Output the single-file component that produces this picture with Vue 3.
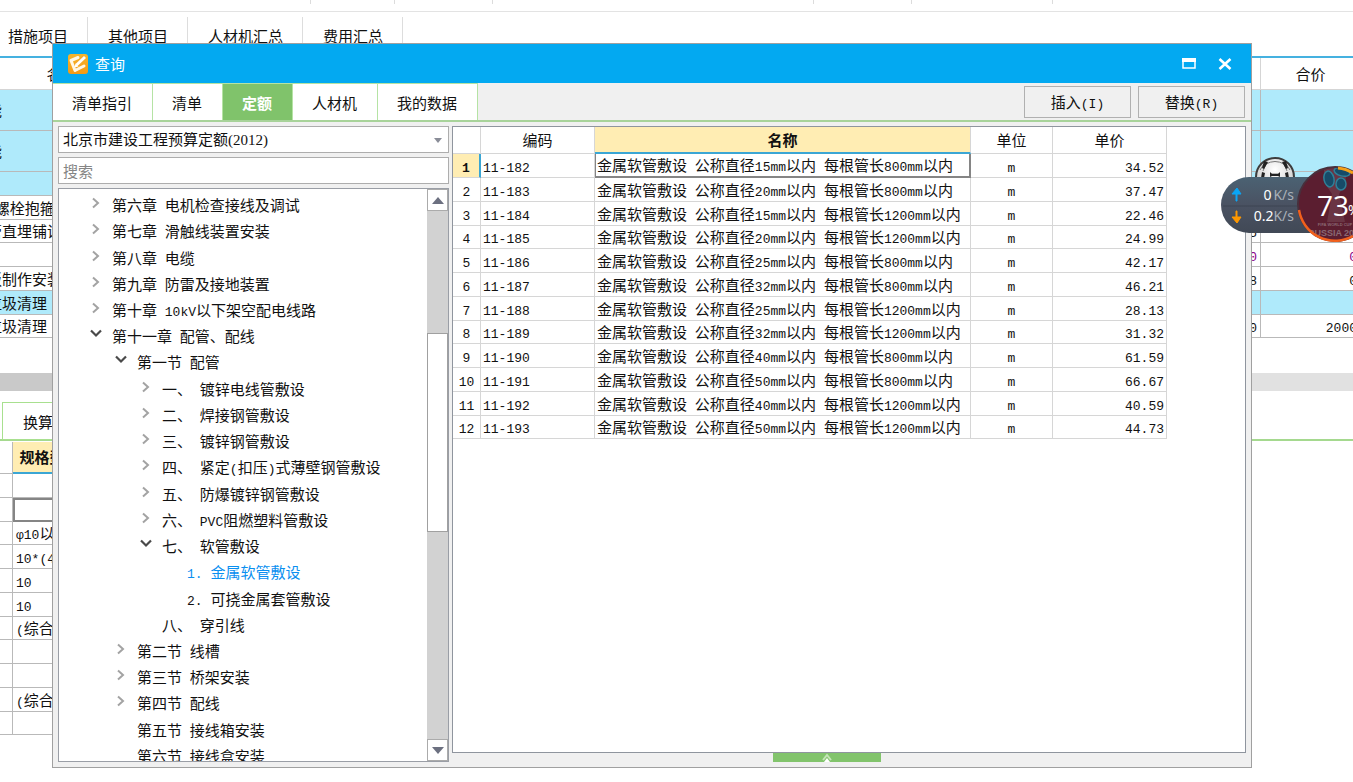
<script setup>
import { h, ref } from 'vue'

// Renders text with its half-width runs in the fixed-pitch face.
const Mixed = (props) =>
  props.text
    .split(/([\x20-\x7eφ]+)/)
    .filter(Boolean)
    .map((run) => (/^[\x20-\x7eφ]/.test(run) ? h('span', { class: 'half' }, run) : run))
Mixed.props = ['text']

const mainTabs = ['措施项目', '其他项目', '人材机汇总', '费用汇总']
const items = [
  { name: '能', tall: true, blue: true },
  { name: '能', tall: true, blue: true },
  { name: '', blue: true },
  { name: ' 螺栓抱箍', price: '44.64' },
  { name: '管直埋铺设', price: '18.15' },
  { name: '', price: '0', total: '0', purple: true },
  { name: '板制作安装', price: '3.18', total: '0' },
  { name: '垃圾清理', blue: true },
  { name: '垃圾清理', price: '2000', total: '2000' },
]
const specs = ['', '', 'φ10以内', '10*(4)', '10', '10', '(综合)', '', '', '(综合)', '']

const tabs = ['清单指引', '清单', '定额', '人材机', '我的数据']
const activeTab = ref('定额')
const query = ref('')

const tree = [
  [0, '第六章 电机检查接线及调试', 'closed'],
  [0, '第七章 滑触线装置安装', 'closed'],
  [0, '第八章 电缆', 'closed'],
  [0, '第九章 防雷及接地装置', 'closed'],
  [0, '第十章 10kV以下架空配电线路', 'closed'],
  [0, '第十一章 配管、配线', 'open'],
  [1, '第一节 配管', 'open'],
  [2, '一、 镀锌电线管敷设', 'closed'],
  [2, '二、 焊接钢管敷设', 'closed'],
  [2, '三、 镀锌钢管敷设', 'closed'],
  [2, '四、 紧定(扣压)式薄壁钢管敷设', 'closed'],
  [2, '五、 防爆镀锌钢管敷设', 'closed'],
  [2, '六、 PVC阻燃塑料管敷设', 'closed'],
  [2, '七、 软管敷设', 'open'],
  [3, '1. 金属软管敷设', 'leaf'],
  [3, '2. 可挠金属套管敷设', 'leaf'],
  [2, '八、 穿引线', 'leaf'],
  [1, '第二节 线槽', 'closed'],
  [1, '第三节 桥架安装', 'closed'],
  [1, '第四节 配线', 'closed'],
  [1, '第五节 接线箱安装', 'leaf'],
  [1, '第六节 接线盒安装', 'leaf'],
].map(([level, label, state]) => ({ level, label, state }))
const current = ref('1. 金属软管敷设')

const rows = [
  [15, 800, '34.52'],
  [20, 800, '37.47'],
  [15, 1200, '22.46'],
  [20, 1200, '24.99'],
  [25, 800, '42.17'],
  [32, 800, '46.21'],
  [25, 1200, '28.13'],
  [32, 1200, '31.32'],
  [40, 800, '61.59'],
  [50, 800, '66.67'],
  [40, 1200, '40.59'],
  [50, 1200, '44.73'],
].map(([d, len, price], i) => ({
  code: `11-${182 + i}`,
  name: `金属软管敷设 公称直径${d}mm以内 每根管长${len}mm以内`,
  price,
}))
</script>

<template>
  <div class="page">
    <div class="ribbon">
      <i v-for="n in 6" :key="n" :class="'sep' + n"></i>
    </div>
    <nav class="main-tabs">
      <button v-for="t in mainTabs" :key="t">{{ t }}</button>
    </nav>

    <table class="items">
      <colgroup><col class="c-item" /><col /><col class="c-num" /><col class="c-num" /></colgroup>
      <thead>
        <tr><th>名称</th><th></th><th></th><th>合价</th></tr>
      </thead>
      <tbody>
        <tr v-for="(r, i) in items" :key="i" :class="{ tall: r.tall, blue: r.blue, purple: r.purple }">
          <td><Mixed :text="r.name" /></td>
          <td></td>
          <td class="num"><Mixed :text="r.price || ''" /></td>
          <td class="num"><Mixed :text="r.total || ''" /></td>
        </tr>
      </tbody>
    </table>

    <div class="splitter"><i></i><i></i></div>
    <div class="sub-tabs"><button>换算信息</button></div>

    <table class="specs">
      <colgroup><col class="c-edge" /><col class="c-spec" /><col /></colgroup>
      <thead>
        <tr><th></th><th class="picked">规格型号</th><th></th></tr>
      </thead>
      <tbody>
        <tr v-for="(s, i) in specs" :key="i">
          <td></td>
          <td :class="{ cell: i === 1 }"><Mixed :text="s" /></td>
          <td></td>
        </tr>
      </tbody>
    </table>

    <section class="dialog" role="dialog" aria-label="查询">
      <header class="title">
        <svg class="logo" width="20" height="20" viewBox="0 0 20 20">
          <defs>
            <linearGradient id="amber" x1="0" y1="0" x2="0" y2="1">
              <stop offset="0" stop-color="#f7b52c" /><stop offset="1" stop-color="#f39a16" />
            </linearGradient>
          </defs>
          <rect width="20" height="20" rx="3" fill="url(#amber)" />
          <path d="M10 3.500L3 6.500 7 16.500 16 12" fill="none" stroke="#fff6e4" stroke-width="3" stroke-linejoin="round" stroke-linecap="round" />
          <path d="M8 11.500L17 3" stroke="#f5a828" stroke-width="5" />
          <path d="M8.500 11L17 3" stroke="#fff" stroke-width="3" />
          <path d="M6.500 13.500l1-4 3 3z" fill="#fff" />
        </svg>
        <h1>查询</h1>
        <button class="win" aria-label="最大化">
          <svg width="14" height="12" viewBox="0 0 14 12"><path d="M1 1h12v9H1z" fill="none" stroke="#fff" stroke-width="1.500" /><path d="M0 0h14v4H0z" fill="#fff" /></svg>
        </button>
        <button class="win" aria-label="关闭">
          <svg width="14" height="12" viewBox="0 0 14 12"><path d="M1.500 1l11 10M12.500 1l-11 10" stroke="#fff" stroke-width="2.600" /></svg>
        </button>
      </header>

      <div class="bar">
        <nav class="tabs">
          <button v-for="t in tabs" :key="t" :class="{ active: t === activeTab }" @click="activeTab = t">{{ t }}</button>
        </nav>
        <button class="action"><Mixed text="插入(I)" /></button>
        <button class="action"><Mixed text="替换(R)" /></button>
      </div>

      <div class="body">
        <aside>
          <div class="combo">
            <select aria-label="定额库"><option>北京市建设工程预算定额(2012)</option></select>
            <svg width="8" height="5" viewBox="0 0 8 5"><path d="M0 0h8L4 5z" fill="#8a8d98" /></svg>
          </div>
          <input v-model="query" type="text" placeholder="搜索" aria-label="搜索" />
          <div class="tree">
            <div class="view">
              <ul>
                <li v-for="n in tree" :key="n.label" :class="'lv' + n.level">
                  <button :class="{ current: n.label === current }" @click="current = n.label">
                    <svg width="12" height="12" viewBox="0 0 12 12" fill="none">
                      <path v-if="n.state === 'closed'" d="M3 1.500l5 4.500-5 4.500" stroke="#a3a3a3" stroke-width="2" />
                      <path v-if="n.state === 'open'" d="M1 2.500l5 5 5-5" stroke="#4a4a4a" stroke-width="2.200" />
                    </svg>
                    <span><Mixed :text="n.label" /></span>
                  </button>
                </li>
              </ul>
            </div>
            <div class="scroll">
              <button aria-label="向上"><svg width="12" height="7" viewBox="0 0 12 7"><path d="M6 0l6 7H0z" fill="#6c7080" /></svg></button>
              <i class="gap-top"></i>
              <i class="thumb"></i>
              <i class="gap-bottom"></i>
              <button aria-label="向下"><svg width="12" height="7" viewBox="0 0 12 7"><path d="M6 7l6-7H0z" fill="#6c7080" /></svg></button>
            </div>
          </div>
        </aside>

        <main>
          <div class="panel">
            <table class="grid">
              <colgroup><col class="g-no" /><col class="g-code" /><col class="g-name" /><col class="g-unit" /><col class="g-code" /></colgroup>
              <thead>
                <tr><th></th><th>编码</th><th class="picked">名称</th><th>单位</th><th>单价</th></tr>
              </thead>
              <tbody>
                <tr v-for="(r, i) in rows" :key="r.code">
                  <th :class="{ mark: i === 0 }"><Mixed :text="String(i + 1)" /></th>
                  <td><Mixed :text="r.code" /></td>
                  <td :class="{ cell: i === 0 }"><Mixed :text="r.name" /></td>
                  <td class="mid"><Mixed text="m" /></td>
                  <td class="num"><Mixed :text="r.price" /></td>
                </tr>
              </tbody>
            </table>
          </div>
          <button class="expand" aria-label="展开">
            <svg width="12" height="9" viewBox="0 0 12 9"><path d="M2 7l4-5 4 5" fill="none" stroke="#c5e5b8" stroke-width="2" /><path d="M6 5l3 4H3z" fill="#fff" /></svg>
          </button>
        </main>
      </div>
    </section>

    <svg class="meter" width="138" height="100" viewBox="0 0 138 100">
      <defs>
        <linearGradient id="slate" x1="0" y1="0" x2="0" y2="1">
          <stop offset="0" stop-color="#4b6273" /><stop offset="0.500" stop-color="#4a5262" /><stop offset="1" stop-color="#414956" />
        </linearGradient>
        <radialGradient id="leather" cx="0.500" cy="0.300" r="0.700">
          <stop offset="0" stop-color="#fff" /><stop offset="1" stop-color="#c4c4c4" />
        </radialGradient>
        <clipPath id="disc"><circle cx="120" cy="54" r="36" /></clipPath>
      </defs>
      <circle cx="60" cy="27" r="19" fill="url(#leather)" stroke="#3d3d3d" stroke-width="2" />
      <path d="M55 24h10M51 14q9-5 18 0M51 14l-3 7M69 14l3 7M45 20l4-6M75 20l-4-6" fill="none" stroke="#777" stroke-width="1" />
      <path d="M55 22l2 2h6l2-2v5l-2-1h-6l-2 1zM49 11l4 1-4 7-2-1zM71 11l-4 1 4 7 2-1zM47 22l3 1-1 5h-3zM73 22l-3 1 1 5h3z" fill="#222" />
      <rect x="6" y="27" width="124" height="56" rx="28" fill="url(#slate)" />
      <path d="M8 56h76" stroke="#3d4552" />
      <path d="M21 51v-7h-4l5-6 4 6h-4v7z" fill="#0aa5f5" stroke="#0aa5f5" />
      <path d="M21 61v6h-4l5 6 4-6h-4v-6z" fill="#ff9800" stroke="#ff9800" />
      <g class="speed" text-anchor="end">
        <text x="79" y="50"><tspan fill="#fff">0</tspan><tspan dx="2">K/s</tspan></text>
        <text x="79" y="71"><tspan fill="#fff">0.2</tspan><tspan>K/s</tspan></text>
      </g>
      <circle cx="120" cy="54" r="37" fill="#5b1e30" stroke="#48303c" stroke-width="2" />
      <g clip-path="url(#disc)">
        <path d="M109 18q11-6 23 2l-2 14-6 10 6 28h-18l5-28-8-12z" fill="#6a3544" />
        <g fill="#174b68" stroke="#2f8098" stroke-width="1.500">
          <ellipse cx="114" cy="29" rx="5" ry="8" transform="rotate(-12 114 29)" />
          <ellipse cx="127" cy="22" rx="8" ry="4" transform="rotate(14 127 22)" />
          <ellipse cx="126" cy="34" rx="5" ry="6" />
        </g>
        <g class="cup"><text x="120" y="76" font-size="4">FIFA WORLD CUP</text><text x="121" y="86" font-size="9">RUSSIA 2018</text></g>
      </g>
      <path d="M123 18a36 36 0 0 1 15 5" fill="none" stroke="#f5a019" stroke-width="3" />
      <path d="M84 60a36.500 36.500 0 0 0 54 26" fill="none" stroke="#f2611d" stroke-width="2.500" />
      <text class="pct" x="102" y="66">73</text>
      <text class="unit" x="133" y="65">%</text>
    </svg>
  </div>
</template>

<style>
body { margin: 0; overflow: hidden; }
.half { font-family: "Liberation Mono", monospace; font-size: 13px; line-height: 13px; white-space: pre; }
</style>

<style scoped>
.page {
  position: relative;
  min-height: 100vh;
  overflow: hidden;
  background: #fff;
  color: #111;
  font: 15px/20px "Noto Sans CJK SC", sans-serif;
}
.page *, .page { box-sizing: border-box; }
button, input, select { font: inherit; color: inherit; }
button { padding: 0; border: 0; background: none; cursor: pointer; }
table { border-spacing: 0; table-layout: fixed; }
th, td { height: 24px; padding: 0 3px; line-height: 20px; white-space: nowrap; overflow: hidden; text-align: left; font-weight: 400; }
thead th { text-align: center; }
.num { text-align: right; }

.ribbon { display: flex; height: 12px; border-bottom: 1px solid #e3e3e3; }
.ribbon i { height: 4px; border-right: 1px solid #dcdcdc; }
.sep1 { width: 23%; }
.sep2 { width: 84px; }
.sep3 { width: 98px; }
.sep4 { width: 321px; }
.sep5 { width: 98px; }
.sep6 { width: 141px; }
.main-tabs { display: flex; height: 46px; padding-top: 5px; border-bottom: 2px solid #45b1e0; }
.main-tabs button { padding: 0 19px 2px 20px; border-right: 1px solid #ddd; }
.main-tabs button:first-child { padding-left: 8px; }

.items { width: calc(100% + 24px); margin-left: -16px; }
.c-item { width: 156px; }
.c-num { width: 100px; }
.items th { height: 32px; }
.items .tall td { height: 41px; }
.items tr:nth-child(4n + 5) td { height: 23px; }
.items th, .items td { border-right: 1px solid #b9b9b9; border-bottom: 1px solid #b9b9b9; }
.items th { border-color: #d5d5d5; }
.blue { background: #afeafb; }
.purple { color: #8b008b; }

.splitter { display: flex; height: 18px; margin: 35px 0 11px; }
.splitter i { flex: 1; background: #e1e1e1; }
.splitter i:first-child { background: #c9c9c9; }
.sub-tabs { height: 39px; border-bottom: 2px solid #a5d98f; }
.sub-tabs button { height: 38px; margin-left: 2px; padding: 2px 20px 0; border: 1px solid #a8e08f; }

.specs { width: 80%; margin-top: 1px; }
.specs th { height: 32px; }
.specs tr:nth-child(4n + 3) td { height: 23px; }
.c-edge { width: 13px; }
.c-spec { width: 74px; }
.specs th, .specs td { border-right: 1px solid #b9b9b9; border-bottom: 1px solid #b9b9b9; }
.page th.picked { background: #ffedb3; border-bottom: 2px solid #3ba6d4; font-weight: 700; text-align: center; }
.specs .cell { border: 2px solid #858585; }

.dialog {
  position: absolute;
  inset: 43px 101px 14px 52px;
  display: flex;
  flex-direction: column;
  background: #f0f0f0;
  border: 1px solid #a0a0a0;
}
.title { display: flex; align-items: center; height: 39px; padding: 0 8px 0 15px; background: #03a9f1; color: #fff; }
.title h1 { flex: 1; margin: 0 0 0 7px; font-size: 15px; font-weight: 400; }
.win { display: grid; place-items: center; width: 36px; height: 30px; }
.bar { display: flex; align-items: center; height: 39px; padding-right: 6px; border-bottom: 2px solid #a8d39a; }
.tabs { display: flex; align-self: stretch; flex: 1; }
.tabs button { min-width: 70px; padding: 2px 20px 0 19px; border-right: 1px solid #b5e3a4; border-top: 1px solid #b5e3a4; background: #fff; }
.tabs .active { background: #80c36b; color: #fff; font-weight: 700; }
.action { width: 107px; height: 32px; margin-left: 7px; border: 1px solid #b0b0b0; }

.body { display: flex; flex: 1; min-height: 0; padding: 4px 5px 5px; gap: 3px; }
aside { display: flex; flex-direction: column; width: 391px; gap: 4px; }
.combo { position: relative; height: 27px; }
.combo select { width: 100%; height: 100%; padding: 0 4px; border: 1px solid #adadad; border-radius: 0; background: #fff; appearance: none; font-family: "Liberation Serif", "Noto Sans CJK SC", serif; }
.combo svg { position: absolute; right: 7px; top: 12px; }
aside input { width: 100%; height: 27px; padding: 0 4px; border: 1px solid #adadad; border-radius: 0; background: #fff; }
aside input::placeholder { color: #858585; opacity: 1; }
.tree { display: flex; flex: 1; min-height: 0; border: 1px solid #9a9ea6; background: #fff; }
.view { flex: 1; overflow: hidden; }
ul { display: grid; grid-auto-rows: 1fr; height: 577px; margin: 2px 0 0; padding: 0; list-style: none; }
li button { display: flex; align-items: center; height: 100%; white-space: nowrap; text-align: left; }
li span { padding-top: 2px; }
li svg { margin: 0 10px 2px 0; }
.lv0 { padding-left: 31px; }
.lv1 { padding-left: 56px; }
.lv2 { padding-left: 81px; }
.lv3 { padding-left: 106px; }
.current { color: #0a8ff0; }
.scroll { display: flex; flex-direction: column; width: 21px; background: #d2d2d2; }
.scroll button { display: grid; place-items: center; height: 22px; border: 1px solid #ababab; background: #fff; }
.gap-top { flex: 122; }
.thumb { flex: 198; border: 1px solid #a0a0a0; background: #fff; }
.gap-bottom { flex: 208; }

main { display: flex; flex: 1; flex-direction: column; align-items: center; min-width: 0; }
.panel { width: 100%; flex: 1; min-height: 0; overflow: hidden; border: 1px solid #8f959e; background: #fff; }
.grid { width: 714px; }
.g-no { width: 28px; }
.g-code { width: 114px; }
.g-name { width: 376px; }
.g-unit { width: 82px; }
.grid thead th { height: 27px; }
.grid tbody tr:nth-child(4n) > * { height: 23px; }
.grid th, .grid td { border-right: 1px solid #d6d6d6; border-bottom: 1px solid #d6d6d6; }
.grid tbody th, .grid .mid { padding: 0; text-align: center; }
.grid td { padding: 0 2px; }
.grid tbody .mark { background: #ffedb3; border-right: 2px solid #3ba6d4; font-weight: 700; }
.grid .cell { padding: 0 0 0 1px; border: 1px solid #858585; border-width: 0 2px 2px 1px; }
.expand { display: grid; place-items: center; width: 108px; height: 9px; margin: 0 45px 0 0; background: #82c46c; }

.meter { position: absolute; top: 150px; right: 0; }
.speed { font: 14px "Noto Sans", sans-serif; fill: #a9b0b8; }
.cup { font-family: "Liberation Sans", sans-serif; text-anchor: middle; fill: #8a6872; font-weight: 700; }
.pct { font: 28px "Open Sans", "Noto Sans", sans-serif; fill: #fff; }
.unit { font: 14px "Noto Sans", sans-serif; fill: #fff; }
</style>
